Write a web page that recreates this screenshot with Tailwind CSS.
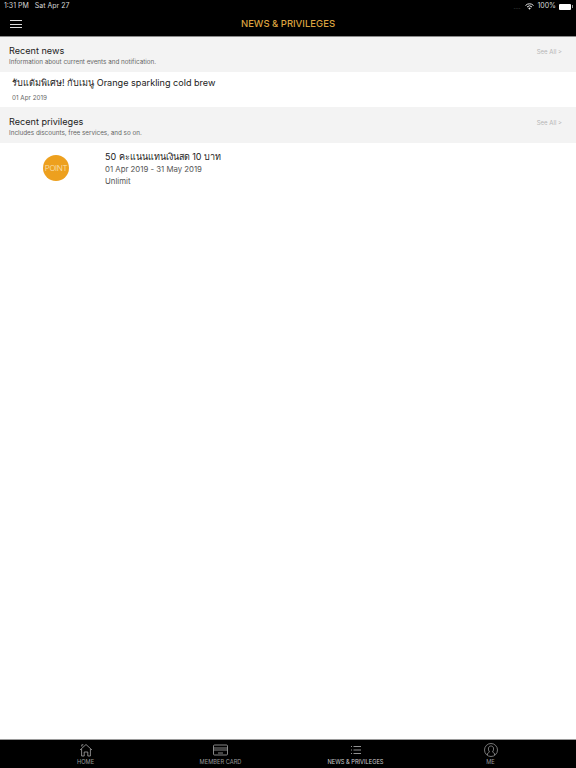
<!DOCTYPE html>
<html lang="en">
  <head>
    <meta charset="UTF-8" />
    <meta name="viewport" content="width=device-width, initial-scale=1.0" />
    <title>News &amp; Privileges</title>
    <script src="https://cdn.jsdelivr.net/npm/@tailwindcss/browser@4"></script>
  </head>
  <body class="bg-white font-['Inter','Noto_Sans',sans-serif]">
    <div class="flex flex-col h-[768px] w-[576px] overflow-hidden">
      <!-- top bar -->
      <header class="bg-black h-[37px] shrink-0 border-b border-[#8a8a8a]">
        <div class="flex items-center justify-between h-[12px] pl-1 pr-[3px] pt-[1px] text-[7px] text-[#d8d8d8]">
          <div class="flex gap-[6px]">
            <span>1:31 PM</span>
            <span>Sat Apr 27</span>
          </div>
          <div class="flex items-center gap-[3px]">
            <span class="text-[#666] text-[6px] mr-[2px]">....</span>
            <svg width="9" height="7" viewBox="0 0 18 14" fill="none" stroke="#e8e8e8" stroke-width="2">
              <path d="M1 5a11 11 0 0 1 16 0M4 8a7 7 0 0 1 10 0" />
              <path d="M6.500 10.500a3.500 3.500 0 0 1 5 0L9 13.500z" fill="#e8e8e8" stroke="none" />
            </svg>
            <span>100%</span>
            <div class="w-[12px] h-[6px] bg-white rounded-[1px]"></div>
            <div class="w-[1px] h-[3px] bg-[#999] -ml-[2px]"></div>
          </div>
        </div>
        <div class="relative flex items-center justify-center h-[24px]">
          <button class="absolute left-[10px] flex flex-col gap-[2.5px]">
            <span class="block w-[12px] h-[1px] bg-[#dddddd]"></span>
            <span class="block w-[12px] h-[1px] bg-[#dddddd]"></span>
            <span class="block w-[12px] h-[1px] bg-[#dddddd]"></span>
          </button>
          <h1 class="text-[9.5px] font-medium text-[#dba23f]">NEWS &amp; PRIVILEGES</h1>
        </div>
      </header>

      <main class="flex-1">
        <section class="bg-[#f3f3f3] h-[35px] pl-[9px] pr-[14px] pt-[7px] flex justify-between">
          <div>
            <h2 class="text-[9.1px] leading-[13px] text-[#222]">Recent news</h2>
            <p class="text-[6.3px] leading-[10px] text-[#666]">Information about current events and notification.</p>
          </div>
          <span class="text-[6px] text-[#b5b5b5] mt-[3px]">See All &gt;</span>
        </section>
        <article class="h-[35px] pl-[12px] pt-[4px]">
          <p class="text-[9.1px] leading-[14px] text-[#222]">รับแต้มพิเศษ! กับเมนู Orange sparkling cold brew</p>
          <p class="text-[6.3px] leading-[10px] mt-[3px] text-[#666]">01 Apr 2019</p>
        </article>
        <section class="bg-[#f3f3f3] h-[36px] pl-[9px] pr-[14px] pt-[8px] flex justify-between">
          <div>
            <h2 class="text-[9.1px] leading-[13px] text-[#222]">Recent privileges</h2>
            <p class="text-[6.3px] leading-[10px] text-[#666]">Includes discounts, free services, and so on.</p>
          </div>
          <span class="text-[6px] text-[#b5b5b5] mt-[3px]">See All &gt;</span>
        </section>
        <article class="flex pt-[7px]">
          <div class="w-[105px] pl-[43px] pt-[5px]">
            <div class="w-[26px] h-[26px] rounded-full bg-[#eda01e] flex items-center justify-center text-[8px] font-light tracking-[-0.4px] text-[#fbe3b8]">POINT</div>
          </div>
          <div class="text-[7.8px] leading-[11.5px] text-[#555]">
            <p class="text-[9px] leading-[14px] text-[#222]">50 คะแนนแทนเงินสด 10 บาท</p>
            <p>01 Apr 2019 - 31 May 2019</p>
            <p>Unlimit</p>
          </div>
        </article>
      </main>

      <!-- tab bar -->
      <nav class="bg-black h-[29px] shrink-0 grid grid-cols-4 px-[18px] text-center text-[5.7px] leading-[7px] text-[#9a9a9a] border-t border-[#9a9a9a]">
        <a class="flex flex-col items-center pt-[3px]">
          <svg width="14" height="14" viewBox="0 0 14 14" fill="none" stroke="#a8a8a8" stroke-width="0.8">
            <path d="M1 7 7 1.500 13 7M2.600 6v7h2.600V9h3.600v4h2.600V6M2.800 3.600V1.800h1.600" />
          </svg>
          <span class="mt-[1px]">HOME</span>
        </a>
        <a class="flex flex-col items-center pt-[3px]">
          <svg width="15" height="14" viewBox="0 0 15 14" fill="none" stroke="#a8a8a8" stroke-width="0.8">
            <rect x="0.500" y="2" width="14" height="10" rx="1" />
            <path d="M0.500 5h14M0.500 7h14M5 10h5" />
          </svg>
          <span class="mt-[1px]">MEMBER CARD</span>
        </a>
        <a class="flex flex-col items-center pt-[3px] text-[#d0d0d0]">
          <svg width="14" height="14" viewBox="0 0 14 14" fill="none" stroke="#b8b8b8" stroke-width="0.8">
            <path d="M4.500 3.500H12M4.500 7H12M4.500 10.500H12M2 3.500h1M2 7h1M2 10.500h1" />
          </svg>
          <span class="mt-[1px]">NEWS &amp; PRIVILEGES</span>
        </a>
        <a class="flex flex-col items-center pt-[3px]">
          <svg width="16" height="14" viewBox="0 0 14 14" fill="none" stroke="#a8a8a8" stroke-width="0.7">
            <circle cx="7" cy="7" r="6.500" />
            <path d="M3.500 12v-1.500L5.500 9C4.500 7.500 4.300 6.500 4.500 5 4.800 3.500 6 3 7 3s2.200.5 2.500 2c.2 1.500 0 2.500-1 4l2 1.500V12" />
          </svg>
          <span class="mt-[1px]">ME</span>
        </a>
      </nav>
    </div>
  </body>
</html>
